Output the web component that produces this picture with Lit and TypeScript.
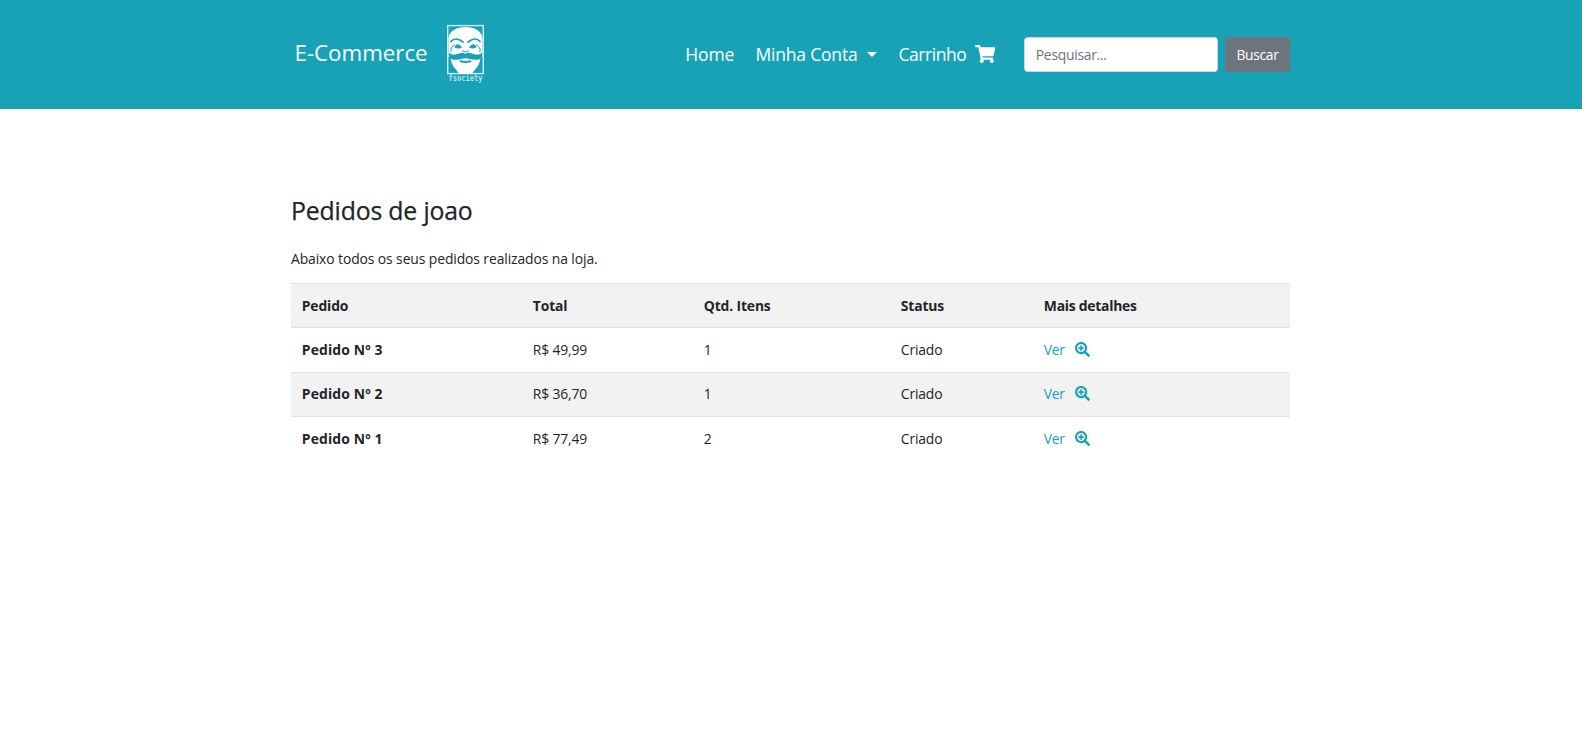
import { LitElement, html, css } from "lit";
import { customElement } from "lit/decorators.js";

const zoomIcon = html`<svg class="zoom" viewBox="0 0 512 512" fill="currentColor"><path d="M304 192v32c0 6.600-5.400 12-12 12h-56v56c0 6.600-5.400 12-12 12h-32c-6.600 0-12-5.400-12-12v-56h-56c-6.600 0-12-5.400-12-12v-32c0-6.600 5.400-12 12-12h56v-56c0-6.600 5.400-12 12-12h32c6.600 0 12 5.400 12 12v56h56c6.600 0 12 5.400 12 12zm201 284.700L476.700 505c-9.400 9.400-24.600 9.400-33.900 0L343 405.300c-4.500-4.500-7-10.600-7-17V372c-35.300 27.600-79.700 44-128 44C93.100 416 0 322.900 0 208S93.100 0 208 0s208 93.100 208 208c0 48.300-16.400 92.700-44 128h16.300c6.400 0 12.500 2.500 17 7l99.700 99.700c9.300 9.400 9.300 24.600 0 34zM344 208c0-75.200-60.800-136-136-136S72 132.800 72 208s60.800 136 136 136 136-60.800 136-136z"/></svg>`;

const cartIcon = html`<svg class="cart" viewBox="0 0 576 512" fill="currentColor"><path d="M528.120 301.319l47.273-208C578.806 78.301 567.391 64 551.990 64H159.208l-9.166-44.810C147.758 8.021 137.930 0 126.529 0H24C10.745 0 0 10.745 0 24v16c0 13.255 10.745 24 24 24h69.883l70.248 343.435C147.325 417.100 136 435.222 136 456c0 30.928 25.072 56 56 56s56-25.072 56-56c0-15.674-6.447-29.835-16.824-40h209.647C430.447 426.165 424 440.326 424 456c0 30.928 25.072 56 56 56s56-25.072 56-56c0-22.172-12.888-41.332-31.579-50.405l5.517-24.276c3.413-15.018-8.002-29.319-23.403-29.319H218.117l-6.545-32h293.145c11.206 0 20.920-7.754 23.403-18.681z"/></svg>`;

const logo = html`<svg class="logo" viewBox="0 0 40 60">
  <rect x="1.700" y="1.600" width="35.600" height="48" fill="none" stroke="#d9f0f4" stroke-width="1.400"/>
  <path fill="#fff" d="M2.500 14C3.500 6.500 11 3 19.500 3S35.500 6.500 36.500 14V33H34.500C34 39 32 42.500 29 45.500L26 49.500H13L10 45.500C7 42.500 5 39 4.500 33H2.500Z"/>
  <g fill="none" stroke="#17a2b8" stroke-linecap="round">
    <path stroke-width="1.900" d="M5 17.500C8 13.800 13 14.800 17 18M34 17.500C31 13.800 26 14.800 22 18"/>
    <path stroke-width="1" d="M5 27.500Q4 23 8.500 21M34 27.500Q35 23 30.500 21M16.500 26.500Q18 29.500 19.500 27.500Q21 29.500 22.500 26.500"/>
    <path stroke-width="2" d="M14.500 37.200Q19.500 38.600 24.500 37.200"/>
  </g>
  <g fill="#17a2b8">
    <path d="M8.500 23.500Q9.500 20 12 20.200T16 23.800Q12 25.300 8.500 23.500ZM30.500 23.500Q29.500 20 27 20.200T23 23.800Q27 25.300 30.500 23.500Z"/>
    <path d="M3 28.500C6 31.500 9 31 13 29.500Q17 28 19.500 30Q22 28 26 29.500C30 31 33 31.500 36 28.500C37 34 34 35.800 29 35.800C24.500 35.800 22.500 34.300 19.500 34.300S14.500 35.800 10 35.800C5 35.800 2 34 3 28.500Z"/>
  </g>
  <text class="logo-text" x="19.500" y="57.300" text-anchor="middle" textLength="34" lengthAdjust="spacingAndGlyphs">fsociety</text>
</svg>`;

const orders = [
  { id: 3, total: "49,99", items: 1, status: "Criado" },
  { id: 2, total: "36,70", items: 1, status: "Criado" },
  { id: 1, total: "77,49", items: 2, status: "Criado" },
];

@customElement("app-root")
export class AppRoot extends LitElement {
  static styles = css`
    :host { display: block; min-height: 754px; background: #fff; color: #212529;
      font: 400 13.9px/21.6px "Open Sans", "Noto Sans", sans-serif; }
    * { box-sizing: border-box; }
    a { text-decoration: none; color: inherit; }
    .bar { height: 109px; background: #17a2b8; color: #fff; }
    .inner, .main { width: 1000px; margin: 0 auto; padding-right: 1px; }
    .inner { height: 100%; display: flex; align-items: center; }
    .brand { display: flex; align-items: center; padding-left: 3.500px; font-size: 22.300px; }
    .brand-name { padding-bottom: 3px; }
    .logo { width: 40px; height: 60px; margin-left: 18px; margin-bottom: 1px; }
    .logo-text { font: 700 8px "DejaVu Sans Mono", monospace; fill: #b5e2ea; }
    .nav { margin-left: auto; display: flex; align-items: center; font-size: 17.500px; gap: 21.500px; letter-spacing: -.2px; }
    .nav a { display: flex; align-items: center; }
    .nav .cart-link { letter-spacing: -.46px; }
    .caret { margin: 0 0 1px 9.500px; border: 5.400px solid transparent; border-top-color: #fff; border-bottom: 0; }
    .cart { width: 20.250px; height: 18px; margin-left: 9px; margin-bottom: 1px; }
    .search { display: flex; gap: 7px; margin-left: 28.500px; }
    .field { width: 194px; height: 34.400px; padding: 5.400px 10.800px; border: 1px solid #ced4da; border-radius: 3.600px; font: inherit; letter-spacing: -.28px; background: #fff; }
    .field::placeholder { color: #6c757d; opacity: 1; }
    .btn { width: 65px; height: 34.400px; border: 0; padding: 0; border-radius: 3.600px; background: #6c757d; color: #fff; font: inherit; letter-spacing: -.35px; }
    .main { padding-top: 86px; }
    .title { margin: 0; font-size: 24.800px; font-weight: 500; line-height: 30px; letter-spacing: -.16px; -webkit-text-stroke: .25px; }
    .lead { margin: 23px 0 13px; letter-spacing: -.1px; }
    .table { width: 100%; table-layout: fixed; border-spacing: 0; }
    .table th, .table td { height: 44px; padding: 11px 10.800px 10px; border-top: 1px solid #dee2e6; text-align: left; vertical-align: top; letter-spacing: -.15px; }
    .table .order { letter-spacing: .15px; }
    .table .wide { letter-spacing: -.25px; }
    .table tr:nth-child(odd) { background: #f2f2f2; }
    .table tr:nth-child(2) > * { height: 45px; }
    .table tr:nth-child(3) > * { padding-top: 10px; }
    .c1 { width: 231px; } .c2 { width: 171px; } .c3 { width: 197px; } .c4 { width: 143px; }
    .ver { color: #17a2b8; letter-spacing: -.35px; }
    .zoom { width: 15px; height: 15px; margin-left: 10.500px; vertical-align: -2.400px; }
  `;
  render() {
    return html`
      <header class="bar"><div class="inner">
        <a class="brand" href="#"><span class="brand-name">E-Commerce</span>${logo}</a>
        <nav class="nav">
          <a href="#">Home</a><a href="#">Minha Conta<span class="caret"></span></a><a class="cart-link" href="#">Carrinho${cartIcon}</a>
        </nav>
        <form class="search"><input class="field" placeholder="Pesquisar..."><button class="btn" type="button">Buscar</button></form>
      </div></header>
      <main class="main">
        <h3 class="title">Pedidos de joao</h3>
        <p class="lead">Abaixo todos os seus pedidos realizados na loja.</p>
        <table class="table"><colgroup><col class="c1"><col class="c2"><col class="c3"><col class="c4"><col></colgroup><tbody>
          <tr><th>Pedido</th><th>Total</th><th>Qtd. Itens</th><th>Status</th><th class="wide">Mais detalhes</th></tr>
          ${orders.map(o => html`<tr><th class="order">Pedido Nº ${o.id}</th><td>R$ ${o.total}</td><td>${o.items}</td><td>${o.status}</td><td><a class="ver" href="#">Ver${zoomIcon}</a></td></tr>`)}
        </tbody></table>
      </main>`;
  }
}
